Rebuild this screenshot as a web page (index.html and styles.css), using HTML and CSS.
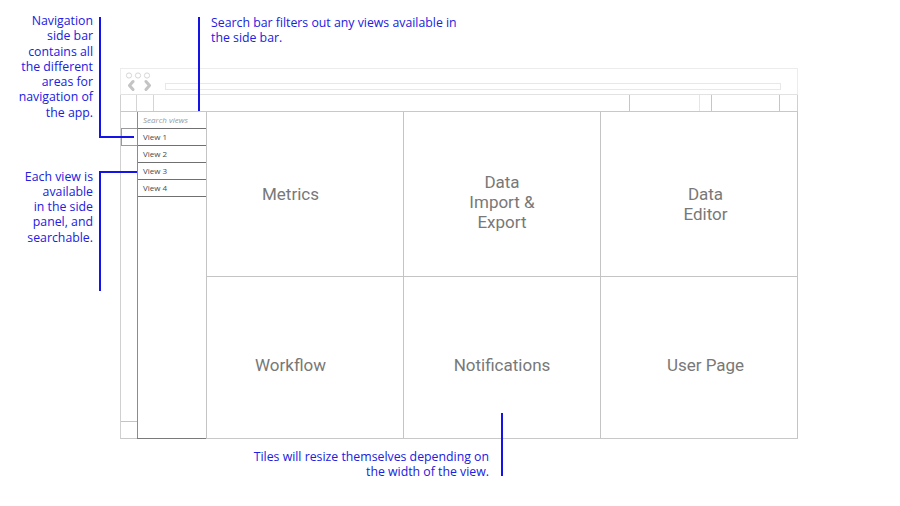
FILE: index.html
```html
<!DOCTYPE html>
<html lang="en">
<head>
<meta charset="utf-8">
<title>Wireframe – navigation and tiles</title>
<link rel="stylesheet" href="styles.css">
</head>
<body>
<div class="canvas">
  <div class="window">
    <div class="chrome">
      <svg class="controls" width="32" height="20" viewBox="0 0 32 20">
        <circle cx="5" cy="4.5" r="2.6" fill="none" stroke="#d6d6d6" stroke-width="1"/>
        <circle cx="14" cy="4.5" r="2.6" fill="none" stroke="#d6d6d6" stroke-width="1"/>
        <circle cx="23" cy="4.5" r="2.6" fill="none" stroke="#d6d6d6" stroke-width="1"/>
        <polyline points="9,10.5 5.5,14.5 9,18.5" fill="none" stroke="#c4c4c4" stroke-width="3" stroke-linecap="round" stroke-linejoin="round"/>
        <polyline points="22,10.5 25.5,14.5 22,18.5" fill="none" stroke="#c4c4c4" stroke-width="3" stroke-linecap="round" stroke-linejoin="round"/>
      </svg>
      <div class="url"></div>
    </div>
    <div class="toolbar">
      <div class="tcell c1"></div>
      <div class="tcell c2"></div>
      <div class="spacer"></div>
      <div class="tcell c3"></div>
      <div class="tcell c4"></div>
      <div class="tcell c5"></div>
      <div class="tcell c6"></div>
    </div>
    <div class="main">
      <div class="strip">
        <div class="strip-box"></div>
        <div class="strip-foot"></div>
      </div>
      <div class="sidebar">
        <div class="row search">Search views</div>
        <div class="row">View 1</div>
        <div class="row">View 2</div>
        <div class="row">View 3</div>
        <div class="row">View 4</div>
      </div>
      <div class="tiles">
        <div class="tile top col1"><span>Metrics</span></div>
        <div class="tile top col2 three"><span>Data<br>Import &amp;<br>Export</span></div>
        <div class="tile top col3 two"><span>Data<br>Editor</span></div>
        <div class="tile bottom col1"><span>Workflow</span></div>
        <div class="tile bottom col2"><span>Notifications</span></div>
        <div class="tile bottom col3"><span>User Page</span></div>
      </div>
    </div>
  </div>

  <div class="note note-nav">Navigation<br>side bar<br>contains all<br>the different<br>areas for<br>navigation of<br>the app.</div>
  <div class="note note-views">Each view is<br>available<br>in the side<br>panel, and<br>searchable.</div>
  <div class="note note-search">Search bar filters out any views available in<br>the side bar.</div>
  <div class="note note-tiles">Tiles will resize themselves depending on<br>the width of the view.</div>

  <div class="line v nav-v"></div>
  <div class="line h nav-h"></div>
  <div class="line v views-v"></div>
  <div class="line h views-h"></div>
  <div class="line v search-v"></div>
  <div class="line v tiles-v"></div>
</div>
</body>
</html>
```

FILE: styles.css
```css
* { box-sizing: border-box; }

html, body {
  margin: 0;
  padding: 0;
  background: #ffffff;
}

.canvas {
  position: relative;
  width: 900px;
  height: 506px;
  padding: 68px 0 0 120px;
  font-family: "Open Sans", "Noto Sans", sans-serif;
  overflow: hidden;
}

/* ---------- browser window ---------- */
.window {
  width: 678px;
  display: flex;
  flex-direction: column;
}

.chrome {
  height: 27px;
  display: flex;
  align-items: flex-start;
  padding: 2px 16px 0 3px;
  border: 1px solid #ececec;
  border-bottom-color: #e2e2e2;
}

.controls {
  display: block;
  flex: none;
}

.url {
  flex: 1;
  height: 7px;
  margin: 12px 0 0 9px;
  border: 1px solid #e8e8e8;
}

.toolbar {
  height: 16px;
  display: flex;
  border-left: 1px solid #d0d0d0;
  border-right: 1px solid #d0d0d0;
}

.tcell { height: 100%; }
.c1 { width: 16px; border-right: 1px solid #d4d4d4; }
.c2 { width: 17px; border-right: 1px solid #d4d4d4; }
.spacer { flex: 1; }
.c3 { width: 70px; border-left: 1px solid #c6c6c6; }
.c4 { width: 12px; border-left: 1px solid #e6e6e6; }
.c5 { width: 68px; border-left: 1px solid #c6c6c6; }
.c6 { width: 18px; border-left: 1px solid #c6c6c6; }

.main {
  height: 328px;
  display: flex;
  border-top: 1px solid #c8c8c8;
  border-bottom: 1px solid #c8c8c8;
  border-left: 1px solid #d0d0d0;
}

.strip {
  width: 16px;
  display: flex;
  flex-direction: column;
}

.strip-box {
  margin-top: 16px;
  height: 18px;
  border: 1px solid #9a9a9a;
  border-right: none;
}

.strip-foot {
  margin-top: auto;
  height: 17px;
  border-top: 1px solid #c4c4c4;
}

.sidebar {
  width: 69px;
  border-left: 1px solid #8c8c8c;
  box-shadow: 0 1px 0 #7a7a7a;
  display: flex;
  flex-direction: column;
}

.row {
  height: 17px;
  border-bottom: 1px solid #707070;
  padding-left: 5px;
  font-size: 8px;
  line-height: 16px;
  color: #4a4a4a;
  white-space: nowrap;
}

.row.search {
  font-style: italic;
  color: #999999;
}

.tiles {
  width: 592px;
  display: grid;
  grid-template-columns: 197px 197px 197px;
  grid-template-rows: 164px 162px;
  border-right: 1px solid #c4c4c4;
}

.tile {
  border-left: 1px solid #c4c4c4;
  display: flex;
  align-items: center;
  justify-content: center;
  text-align: center;
  font-family: Roboto, "Open Sans", sans-serif;
  font-size: 17px;
  line-height: 20px;
  color: #787878;
}

.tile.bottom {
  border-top: 1px solid #c4c4c4;
  padding-top: 14px;
}

.tile.col1 { padding-right: 29px; }
.tile.col3 { padding-left: 13px; }
.tile.three { padding-top: 15px; }
.tile.two { padding-top: 19px; }

/* ---------- annotations ---------- */
.note {
  position: absolute;
  font-size: 12.3px;
  line-height: 15.3px;
  color: #2020e0;
  white-space: nowrap;
}

.note-nav {
  top: 13px;
  right: 807px;
  text-align: right;
}

.note-views {
  top: 168.5px;
  right: 807px;
  text-align: right;
}

.note-search {
  top: 15px;
  left: 211px;
}

.note-tiles {
  top: 449px;
  right: 411px;
  text-align: right;
}

.line {
  position: absolute;
  background: #1414e6;
}

.line.v { width: 2px; }
.line.h { height: 2px; }

.nav-v { left: 99px; top: 17px; height: 121px; }
.nav-h { left: 99px; top: 136px; width: 35px; }
.views-v { left: 99px; top: 171px; height: 120px; }
.views-h { left: 99px; top: 171px; width: 38px; }
.search-v { left: 198px; top: 17px; height: 94px; }
.tiles-v { left: 501px; top: 413px; height: 63px; }
```
